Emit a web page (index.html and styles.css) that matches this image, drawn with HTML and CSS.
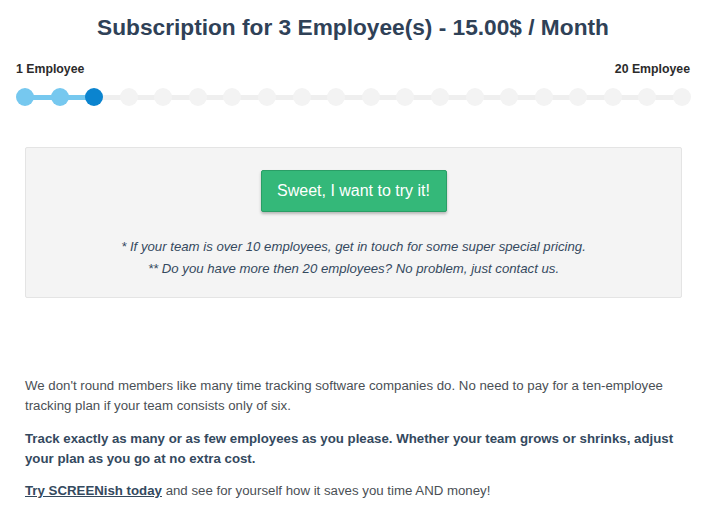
FILE: index.html
```html
<!DOCTYPE html>
<html lang="en">
<head>
    <meta charset="UTF-8">
    <title>Subscription</title>
    <link rel="stylesheet" href="styles.css">
</head>
<body>
<div class="page">
    <h1 class="title">Subscription for 3 Employee(s) - 15.00$ / Month</h1>

    <div class="range">
        <div class="range_labels">
            <span>1 Employee</span>
            <span>20 Employee</span>
        </div>
        <div class="slider">
            <div class="track"></div>
            <div class="track_fill"></div>
            <ul class="dots">
                <li class="on"></li>
                <li class="on"></li>
                <li class="current"></li>
                <li></li><li></li><li></li><li></li><li></li><li></li><li></li>
                <li></li><li></li><li></li><li></li><li></li><li></li><li></li>
                <li></li><li></li><li></li>
            </ul>
        </div>
    </div>

    <div class="offer">
        <a class="btn" href="#">Sweet, I want to try it!</a>
        <p class="note">* If your team is over 10 employees, get in touch for some super special pricing.</p>
        <p class="note">** Do you have more then 20 employees? No problem, just contact us.</p>
    </div>

    <div class="info">
        <p>We don't round members like many time tracking software companies do. No need to pay for a ten-employee tracking plan if your team consists only of six.</p>
        <p class="strong">Track exactly as many or as few employees as you please. Whether your team grows or shrinks, adjust your plan as you go at no extra cost.</p>
        <p><a href="#">Try SCREENish today</a> and see for yourself how it saves you time AND money!</p>
    </div>
</div>
</body>
</html>
```

FILE: styles.css
```css
* {
    margin: 0;
    padding: 0;
    box-sizing: border-box;
}

body {
    font-family: "Liberation Sans", Arial, sans-serif;
    color: #34495e;
    background: #ffffff;
}

.page {
    width: 706px;
    padding-top: 13px;
}

.title {
    font-size: 22.7px;
    font-weight: bold;
    text-align: center;
    line-height: 28px;
    color: #2f4157;
}

.range {
    margin: 21px 15px 0 16px;
}

.range_labels {
    display: flex;
    justify-content: space-between;
    font-size: 12.3px;
    font-weight: bold;
    color: #2b2b2b;
    line-height: 14px;
}

.range_labels span:last-child {
    margin-right: 1px;
}

.slider {
    position: relative;
    height: 20px;
    margin-top: 11px;
}

.track {
    position: absolute;
    left: 9px;
    right: 9px;
    top: 8px;
    height: 5px;
    background: #efefef;
    border-radius: 3px;
}

.track_fill {
    position: absolute;
    left: 9px;
    width: 70px;
    top: 8px;
    height: 5px;
    background: #76c8ef;
}

.dots {
    position: relative;
    list-style: none;
    display: flex;
    justify-content: space-between;
    height: 20px;
    align-items: center;
}

.dots li {
    width: 18px;
    height: 18px;
    border-radius: 50%;
    background: #f3f3f3;
}

.dots .on {
    background: #76c8ef;
}

.dots .current {
    background: #0b84cf;
}

.offer {
    margin: 40px 0 0 25px;
    background: #f4f4f4;
    border: 1px solid #e4e4e4;
    border-radius: 2px;
    height: 151px;
    width: 657px;
    text-align: center;
    padding-top: 22px;
}

.btn {
    display: inline-block;
    width: 186px;
    height: 42px;
    line-height: 40px;
    background: #34b879;
    border: 1px solid #2a9e66;
    border-radius: 2px;
    box-shadow: 0 2px 3px rgba(0, 0, 0, 0.25);
    color: #ffffff;
    font-size: 16px;
    text-decoration: none;
    margin-bottom: 24px;
}

.note {
    font-size: 13.2px;
    font-style: italic;
    line-height: 22px;
    color: #34495e;
}

.info {
    margin: 78px 0 0 25px;
    width: 662px;
    font-size: 13.25px;
    line-height: 20px;
    color: #4a4f55;
}

.info p {
    margin-bottom: 13px;
}

.info .strong {
    font-weight: bold;
    color: #34495e;
    margin-bottom: 12px;
}

.info a {
    color: #34495e;
    font-weight: bold;
    text-decoration: underline;
}
```
